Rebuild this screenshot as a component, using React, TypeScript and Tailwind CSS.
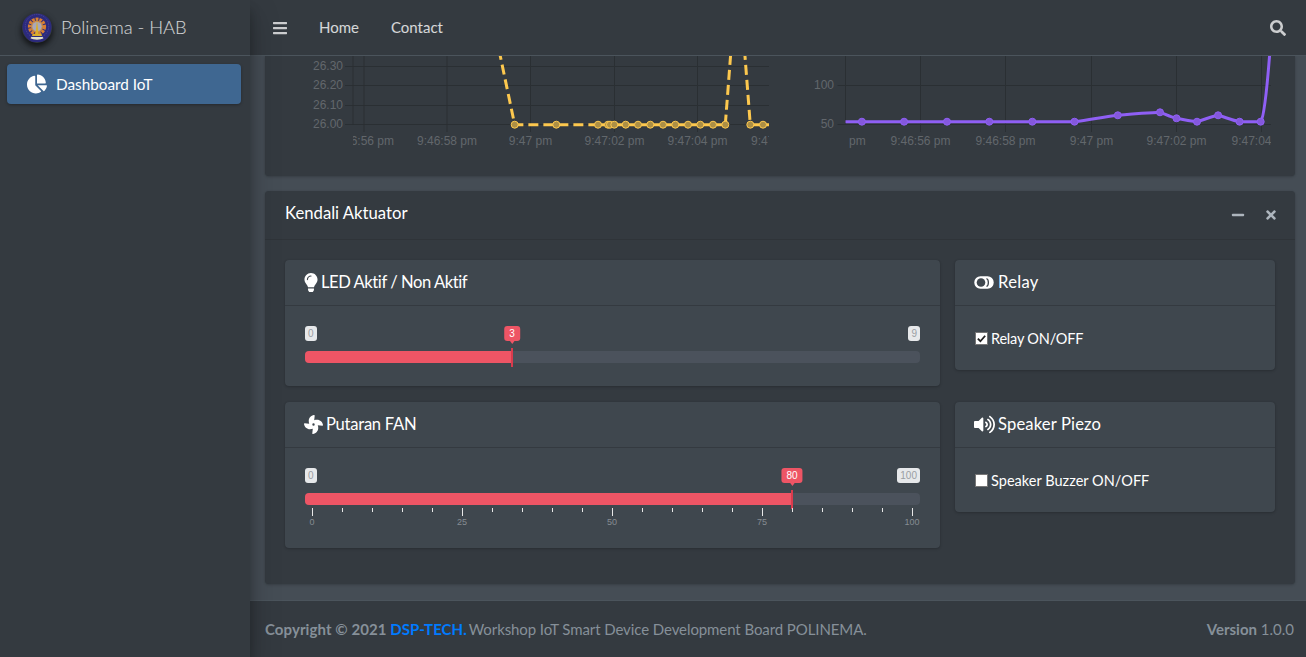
import { FaBars, FaChartPie, FaFan, FaLightbulb, FaMinus, FaSearch, FaTimes, FaVolumeUp } from "react-icons/fa"
import type { ReactNode } from "react"

const CHART_FONT = "Liberation Sans, Arial, sans-serif"

function Logo() {
  return (
    <div className="h-[30px] w-[30px] rounded-full shadow-[0_3px_6px_rgba(0,0,0,0.5),0_3px_6px_rgba(0,0,0,0.4)]">
      <svg viewBox="0 0 32 32" className="h-full w-full">
        <path d="M16 0.5 C23 0.5 31 5 31.5 14 C31.5 22 27 29 20 31 L12 31 C5 29 0.5 22 0.5 14 C1 5 9 0.5 16 0.5Z" fill="#2c2a7c" />
        <circle cx="16" cy="14" r="12.5" fill="none" stroke="#4a4698" strokeWidth="1" strokeDasharray="1.5 1" />
        <circle cx="16" cy="14.5" r="8" fill="none" stroke="#d97f30" strokeWidth="3.4" strokeDasharray="3 1" />
        <circle cx="16" cy="14.5" r="6.5" fill="#c98a4a" />
        <circle cx="16" cy="14.5" r="5" fill="#a9a8b8" />
        <path d="M16 7 L17.8 23.5 L14.2 23.5 Z" fill="#d9ad2c" />
        <path d="M10.5 24.5 L21.5 24.5 L20.5 22.5 L11.5 22.5 Z" fill="#d9ad2c" />
        <path d="M9 27 C12 29 20 29 23 27 L22 25.6 L10 25.6 Z" fill="#e2e0c8" />
      </svg>
    </div>
  )
}

function RelayIcon() {
  return (
    <svg viewBox="0 0 20 13" className="h-[13px] w-[20px]" fill="none">
      <rect x="1" y="1" width="18" height="11" rx="5.5" fill="#fff" stroke="#fff" strokeWidth="1.5" />
      <circle cx="7" cy="6.5" r="4.3" fill="#3f474e" />
      <path d="M12.5 2.5 C15 3.5 15 9.5 12.5 10.5" stroke="#3f474e" strokeWidth="1.3" />
    </svg>
  )
}

function Sidebar() {
  return (
    <aside className="z-20 flex w-[250px] shrink-0 flex-col bg-[#343a40] shadow-[0_14px_28px_rgba(0,0,0,0.25),0_10px_10px_rgba(0,0,0,0.22)]">
      <div className="flex h-14 items-center gap-[9px] border-b border-[#4b545c] pl-[22px]">
        <Logo />
        <span className="text-[18.4px] font-light tracking-[-0.05px] text-white/80">Polinema - HAB</span>
      </div>
      <nav className="pl-[7px] pr-[9px] pt-2">
        <a className="flex h-10 items-center rounded bg-[#3f6791] pl-5 text-white shadow-[0_1px_3px_rgba(0,0,0,0.3)]">
          <FaChartPie className="h-5 w-5" />
          <span className="ml-[9px] text-[15.3px]">Dashboard IoT</span>
        </a>
      </nav>
    </aside>
  )
}

function Navbar() {
  return (
    <header className="z-10 flex h-14 shrink-0 items-center border-b border-[#4b545c] bg-[#343a40] pl-[23px] pr-5 text-white/75">
      <FaBars className="h-4 w-[14px]" />
      <div className="ml-8 flex gap-8 text-[15px] text-white/80">
        <a>Home</a>
        <a>Contact</a>
      </div>
      <FaSearch className="ml-auto h-4 w-4" />
    </header>
  )
}

type Pt = [number, number]

function ChartFrame({ id, viewBox, width, left, right, yTicks, xTicks, labelRight, children }: {
  id: string
  viewBox: string
  width: number
  left: number
  right: number
  yTicks: [number, string][]
  xTicks: [number, string][]
  labelRight: number
  children: ReactNode
}) {
  return (
    <svg viewBox={viewBox} width={width} height={120} className="block shrink-0">
      <defs>
        <clipPath id={id}>
          <rect x={left} y={40} width={right - left} height={130} />
        </clipPath>
      </defs>
      <g stroke="#2a2f33" strokeWidth="1">
        {yTicks.map(([y]) => (
          <line key={y} x1={left - 8} x2={right} y1={y} y2={y} />
        ))}
        <line x1={left} x2={left} y1={40} y2={124.5} />
        <g clipPath={`url(#${id})`}>
          {xTicks.map(([x]) => (
            <line key={x} x1={x} x2={x} y1={40} y2={132} />
          ))}
        </g>
      </g>
      <g fontFamily={CHART_FONT} fontSize="12" fill="#62676c">
        {yTicks.map(([y, label]) => (
          <text key={y} x={labelRight} y={y + 3} textAnchor="end">{label}</text>
        ))}
        <g clipPath={`url(#${id})`}>
          {xTicks.map(([x, label]) => (
            <text key={x} x={x} y={145} textAnchor="middle">{label}</text>
          ))}
        </g>
      </g>
      <g clipPath={`url(#${id})`}>{children}</g>
    </svg>
  )
}

const TEMP_POINTS = [514.7, 556.3, 598, 608, 610, 614.3, 625.7, 638, 650.3, 663, 675.3, 688, 700.3, 713, 725.3, 750.3, 763]

const FAN_POINTS: Pt[] = [
  [861.9, 121.7], [904.1, 121.7], [947, 121.7], [989.3, 121.7], [1032.3, 121.7], [1074.5, 121.7],
  [1117.8, 115.3], [1160, 112.3], [1176.5, 118.3], [1197, 121.7], [1218.1, 115.3], [1239.6, 121.7], [1260.7, 121.7],
]

function TemperatureChart() {
  return (
    <ChartFrame
      id="temp"
      viewBox="305 56 480 120"
      width={480}
      left={353}
      right={769}
      labelRight={343}
      yTicks={[[66.5, "26.30"], [85.5, "26.20"], [105.5, "26.10"], [124.5, "26.00"]]}
      xTicks={[[364, "9:46:56 pm"], [447, "9:46:58 pm"], [530.5, "9:47 pm"], [614.5, "9:47:02 pm"], [697.5, "9:47:04 pm"], [781, "9:47:06 pm"]]}
    >
      <path
        d="M499 50 L514.7 124.7 L598 124.7 M725.3 124.7 L731 50 M744.5 50 L750.3 124.7 L775 124.7"
        fill="none"
        stroke="#fdc84e"
        strokeWidth="3"
        strokeDasharray="10 5"
      />
      <line x1={598} x2={725.3} y1={124.7} y2={124.7} stroke="#fdc84e" strokeWidth="3" />
      {TEMP_POINTS.map((x) => (
        <circle key={x} cx={x} cy={124.7} r={3.5} fill="#ad8f45" stroke="#fdc84e" strokeWidth="1" />
      ))}
    </ChartFrame>
  )
}

function FanChart() {
  return (
    <ChartFrame
      id="fan"
      viewBox="800 56 475 120"
      width={475}
      left={845.5}
      right={1271}
      labelRight={834}
      yTicks={[[85.5, "100"], [124.5, "50"]]}
      xTicks={[[920.5, "9:46:56 pm"], [1005.5, "9:46:58 pm"], [1091.5, "9:47 pm"], [1176.5, "9:47:02 pm"], [1261.5, "9:47:04 pm"]]}
    >
      <text x={849} y={145} fontFamily={CHART_FONT} fontSize="12" fill="#62676c">pm</text>
      <path
        d="M845 121.7 L1074.5 121.7 C1090 120 1102 117 1117.8 115.3 C1132 113.5 1147 113 1160 112.3 C1165 114 1170 117 1176.5 118.3 C1184 120 1190 121 1197 121.7 C1205 119.5 1211 116.5 1218.1 115.3 C1225 117 1232 120.5 1239.6 121.7 L1260.7 121.7 C1263.5 118 1267 90 1270 50"
        fill="none"
        stroke="#8f5ff5"
        strokeWidth="3"
      />
      {FAN_POINTS.map(([x, y]) => (
        <circle key={x} cx={x} cy={y} r={3.5} fill="#8458dc" stroke="#8f5ff5" strokeWidth="1" />
      ))}
    </ChartFrame>
  )
}

function Slider({ max, value, grid }: { max: number; value: number; grid?: boolean }) {
  const pct = (value / max) * 100
  const ticks = Array.from({ length: 21 }, (_, i) => i * 5)
  return (
    <div className={grid ? "relative h-[60px]" : "relative h-10"}>
      <span className="absolute left-0 top-0 rounded-[3px] bg-[#e6e8ea] px-[3px] font-['Liberation_Sans',sans-serif] text-[10px] leading-[15px] text-[#9a9ea3]">0</span>
      <span className="absolute right-0 top-0 rounded-[3px] bg-[#e6e8ea] px-[3px] font-['Liberation_Sans',sans-serif] text-[10px] leading-[15px] text-[#9a9ea3]">{max}</span>
      <div className="absolute inset-x-0 top-[25px] h-3 overflow-hidden rounded bg-[#4b525c]">
        <div className="absolute inset-y-0 left-0 bg-[#ee5565]" style={{ width: `calc(7px + (100% - 15px) * ${value / max})` }} />
      </div>
      <div className="absolute inset-x-[7px] right-[8px] top-0 h-full">
        <div className="absolute top-0 -translate-x-1/2" style={{ left: `${pct}%` }}>
          <span className="relative block rounded-[3px] bg-[#ee5565] px-[5px] font-['Liberation_Sans',sans-serif] text-[10px] leading-[15px] text-white">
            {value}
            <span className="absolute left-1/2 top-[14px] h-0 w-0 -translate-x-1/2 border-x-[3px] border-t-[4px] border-x-transparent border-t-[#ee5565]" />
          </span>
        </div>
        <div className="absolute top-[22px] h-[19px] w-[2px] -translate-x-[1px] bg-[#d93b4d]" style={{ left: `${pct}%` }} />
        {grid &&
          ticks.map((t) => (
            <div key={t} className="absolute top-[40px]" style={{ left: `${t}%` }}>
              <div className={t % 25 === 0 ? "h-2 w-px bg-[#e8e8e8]" : "h-1 w-px bg-[#e8e8e8]"} />
              {t % 25 === 0 && (
                <span className="absolute left-0 top-[9px] -translate-x-1/2 font-['Liberation_Sans',sans-serif] text-[9px] leading-[10px] text-[#868c92]">{t}</span>
              )}
            </div>
          ))}
      </div>
    </div>
  )
}

function InnerCard({ icon, title, titleClass, children }: { icon: ReactNode; title: string; titleClass?: string; children: ReactNode }) {
  return (
    <section className="rounded bg-[#3f474e] shadow-[0_0_1px_rgba(0,0,0,0.125),0_1px_3px_rgba(0,0,0,0.2)]">
      <div className="flex h-[46px] items-center gap-[3px] border-b border-[#343a40] px-[19px] text-[16.6px] text-white">
        {icon}
        <h3 className={titleClass}>{title}</h3>
      </div>
      <div className="p-5">{children}</div>
    </section>
  )
}

function Toggle({ label, checked, labelClass }: { label: string; checked?: boolean; labelClass?: string }) {
  return (
    <label className="flex h-6 items-center gap-[3px] text-[14.5px] text-white">
      <span className="flex h-[13px] w-[13px] items-center justify-center border border-[#767676] bg-white">
        {checked && (
          <svg viewBox="0 0 12 12" className="h-[11px] w-[11px]" fill="none" stroke="#222" strokeWidth="2">
            <path d="M2 6.2 L4.8 9 L10 3" />
          </svg>
        )}
      </span>
      <span className={labelClass + " pt-px"}>{label}</span>
    </label>
  )
}

function Content() {
  return (
    <main className="flex-1 overflow-hidden bg-[#454d55] pl-[15px] pr-[11px]">
      <div className="h-[120px] rounded-b bg-[#343a40] shadow-[0_0_1px_rgba(0,0,0,0.125),0_1px_3px_rgba(0,0,0,0.2)]">
        <div className="flex gap-[15px] pl-10">
          <TemperatureChart />
          <FanChart />
        </div>
      </div>

      <div className="mt-[15px] rounded bg-[#343a40] shadow-[0_0_1px_rgba(0,0,0,0.125),0_1px_3px_rgba(0,0,0,0.2)]">
        <div className="flex h-[49px] items-center border-b border-[#2f3439] pl-5 pr-[18px]">
          <h2 className="pb-[2px] text-[16.7px] text-white">Kendali Aktuator</h2>
          <div className="ml-auto flex items-center gap-5 text-[#adb5bd]">
            <FaMinus className="h-[14px] w-[14px]" />
            <FaTimes className="h-[14px] w-[12px]" />
          </div>
        </div>
        <div className="grid grid-cols-[655px_320px] items-start gap-x-[15px] gap-y-4 px-5 pb-9 pt-5">
          <InnerCard icon={<FaLightbulb className="h-[19px] w-[14px]" />} title="LED Aktif / Non Aktif" titleClass="tracking-[-0.45px]">
            <Slider max={9} value={3} />
          </InnerCard>
          <InnerCard icon={<RelayIcon />} title="Relay" titleClass="pl-px tracking-[0.3px]">
            <Toggle label="Relay ON/OFF" labelClass="tracking-[-0.2px]" checked />
          </InnerCard>
          <InnerCard icon={<FaFan className="h-[19px] w-[19px]" />} title="Putaran FAN" titleClass="tracking-[-0.27px]">
            <Slider max={100} value={80} grid />
          </InnerCard>
          <InnerCard icon={<FaVolumeUp className="h-[19px] w-[21px]" />} title="Speaker Piezo" titleClass="tracking-[0.15px]">
            <Toggle label="Speaker Buzzer ON/OFF" labelClass="tracking-[0.03px]" />
          </InnerCard>
        </div>
      </div>
    </main>
  )
}

function Footer() {
  return (
    <footer className="flex h-[57px] shrink-0 items-center justify-between border-t border-[#4b545c] bg-[#343a40] pl-[15px] pr-3 text-[15px] text-[#869099]">
      <div>
        <strong className="tracking-[0.08px]">
          Copyright © 2021 <a className="text-[#007bff]">DSP-TECH.</a>
        </strong>{" "}
        <span className="-ml-[2px] tracking-[-0.09px]">Workshop IoT Smart Device Development Board POLINEMA.</span>
      </div>
      <div>
        <b>Version</b> 1.0.0
      </div>
    </footer>
  )
}

export default function App() {
  return (
    <div className="flex h-screen overflow-hidden bg-[#454d55] font-['Lato',sans-serif]">
      <Sidebar />
      <div className="flex min-w-0 flex-1 flex-col">
        <Navbar />
        <Content />
        <Footer />
      </div>
    </div>
  )
}
